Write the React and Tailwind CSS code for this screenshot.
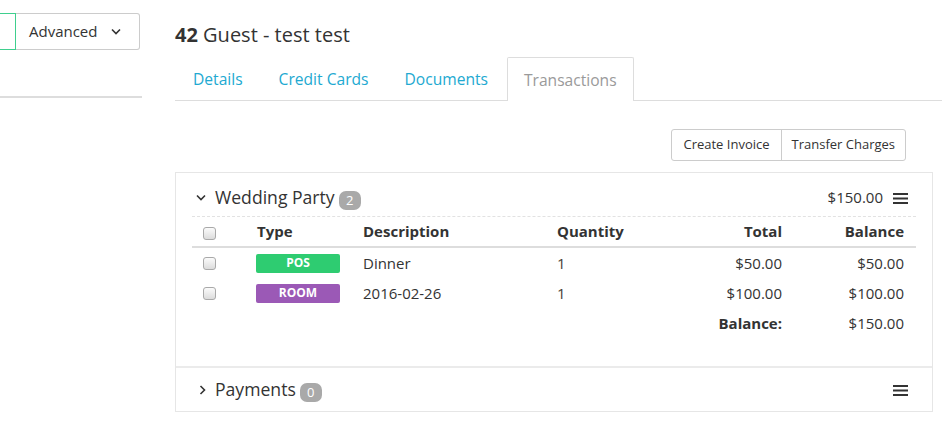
import React from 'react';

// ─── Small drawn pieces ──────────────────────────────────────────────────────
function ChevronDown({ className }) {
  return (
    <svg className={className} width="10" height="7" viewBox="0 0 10 7" fill="none">
      <path d="M1 1.5 L5 5.5 L9 1.5" stroke="#333" strokeWidth="1.6" />
    </svg>
  );
}

function ChevronRight({ className }) {
  return (
    <svg className={className} width="7" height="10" viewBox="0 0 7 10" fill="none">
      <path d="M1.5 1 L5.5 5 L1.5 9" stroke="#333" strokeWidth="1.6" />
    </svg>
  );
}

function Burger() {
  return (
    <svg width="15" height="12" viewBox="0 0 15 12" fill="none">
      <rect x="0" y="1" width="15" height="2" fill="#333" />
      <rect x="0" y="5.5" width="15" height="2" fill="#333" />
      <rect x="0" y="10" width="15" height="2" fill="#333" />
    </svg>
  );
}

function Check() {
  return (
    <span className="block w-[13px] h-[13px] rounded-[3px] border border-[#a9a9a9] bg-gradient-to-b from-[#fbfbfb] to-[#dcdcdc]" />
  );
}

function Badge({ children }) {
  return (
    <span className="inline-flex items-center justify-center h-[19px] min-w-[22px] px-[6px] rounded-[7px] bg-[#a9a9a9] text-white text-[13px] leading-none">
      {children}
    </span>
  );
}

const TABS = ['Details', 'Credit Cards', 'Documents'];

const ROWS = [
  { type: 'POS', color: 'bg-[#2ecc71]', desc: 'Dinner', qty: '1', total: '$50.00', bal: '$50.00' },
  { type: 'ROOM', color: 'bg-[#9b59b6]', desc: '2016-02-26', qty: '1', total: '$100.00', bal: '$100.00' },
];

const GRID = 'grid grid-cols-[57px_106px_194px_131px_110px_126px]';

export default function App() {
  return (
    <div
      className="flex w-[942px] h-[439px] overflow-hidden bg-white text-[#333]"
      style={{ fontFamily: '"Open Sans", "Noto Sans", sans-serif' }}
    >
      {/* ── Left search column ── */}
      <div className="w-[142px] shrink-0 flex flex-col">
        <div className="flex mt-[13px] h-[37px]">
          <div className="w-[16px] border border-l-0 border-[#3fcf8e]" />
          <div className="flex-1 mr-[2px] flex items-center pl-[13px] pr-[18px] border border-l-0 border-[#ccc] rounded-r-[3px] text-[15px]">
            <span className="flex-1">Advanced</span>
            <ChevronDown />
          </div>
        </div>
        <div className="mt-[46px] h-[2px] bg-[#ddd]" />
      </div>

      {/* ── Right detail column ── */}
      <div className="ml-[33px] flex-1 flex flex-col">
        <h1 className="mt-[21px] text-[20px] leading-[28px] text-[#333]">
          <span className="font-bold">42</span> Guest - test test
        </h1>

        <div className="mt-[8px] flex h-[44px] border-b border-[#ddd] text-[15.6px]">
          {TABS.map((t) => (
            <div key={t} className="px-[18px] pt-[2px] flex items-center text-[#22a9d1]">
              {t}
            </div>
          ))}
          <div className="ml-[1px] px-[16px] pt-[2px] -mb-px flex items-center border border-b-0 border-[#ddd] bg-white text-[#9a9a9a] rounded-t-[2px]">
            Transactions
          </div>
        </div>

        <div className="mt-[28px] flex justify-end pr-[36px]">
          <div className="flex h-[32px] border border-[#ccc] rounded-[3px] text-[13px]">
            <div className="px-[11px] flex items-center border-r border-[#ccc]">Create Invoice</div>
            <div className="px-[10px] flex items-center">Transfer Charges</div>
          </div>
        </div>

        {/* ── Transactions card ── */}
        <div className="mt-[11px] w-[758px] border border-[#e6e6e6]">
          <div className="px-[16px] h-[193px]">
            <div className="h-[44px] flex items-center pt-[5px] border-b border-dashed border-[#e2e2e2]">
              <ChevronDown className="ml-[4px] mr-[9px]" />
              <span className="text-[17.6px]">Wedding Party</span>
              <span className="ml-[4px] mt-[3px]"><Badge>2</Badge></span>
              <span className="ml-auto text-[15px]">$150.00</span>
              <span className="ml-[10px] mr-[8px] mt-[2px]"><Burger /></span>
            </div>

            <div className={`${GRID} h-[31px] items-center border-b-2 border-[#ddd] text-[15px] font-bold`}>
              <div className="pl-[11px] pt-[4px]"><Check /></div>
              <div className="pl-[8px]">Type</div>
              <div className="pl-[8px]">Description</div>
              <div className="pl-[8px]">Quantity</div>
              <div className="pr-[8px] text-right">Total</div>
              <div className="pr-[12px] text-right">Balance</div>
            </div>

            {ROWS.map((r) => (
              <div key={r.type} className={`${GRID} h-[30px] items-center text-[15px]`}>
                <div className="pl-[11px]"><Check /></div>
                <div className="pl-[7px]">
                  <span className={`flex items-center justify-center w-[84px] h-[19px] rounded-[2px] ${r.color} text-white text-[12px] font-bold`}>
                    {r.type}
                  </span>
                </div>
                <div className="pl-[8px]">{r.desc}</div>
                <div className="pl-[8px] text-[#4a3f36]">{r.qty}</div>
                <div className="pr-[8px] text-right">{r.total}</div>
                <div className="pr-[12px] text-right">{r.bal}</div>
              </div>
            ))}

            <div className={`${GRID} h-[30px] items-center text-[15px]`}>
              <div className="col-span-5 pr-[8px] text-right font-bold">Balance:</div>
              <div className="pr-[12px] text-right">$150.00</div>
            </div>
          </div>

          <div className="h-[2px] bg-[#ebebeb]" />

          <div className="px-[16px] h-[43px] flex items-center">
            <ChevronRight className="ml-[7px] mr-[9px]" />
            <span className="text-[17.6px]">Payments</span>
            <span className="ml-[4px] mt-[3px]"><Badge>0</Badge></span>
            <span className="ml-auto mr-[8px]"><Burger /></span>
          </div>
        </div>
      </div>
    </div>
  );
}
